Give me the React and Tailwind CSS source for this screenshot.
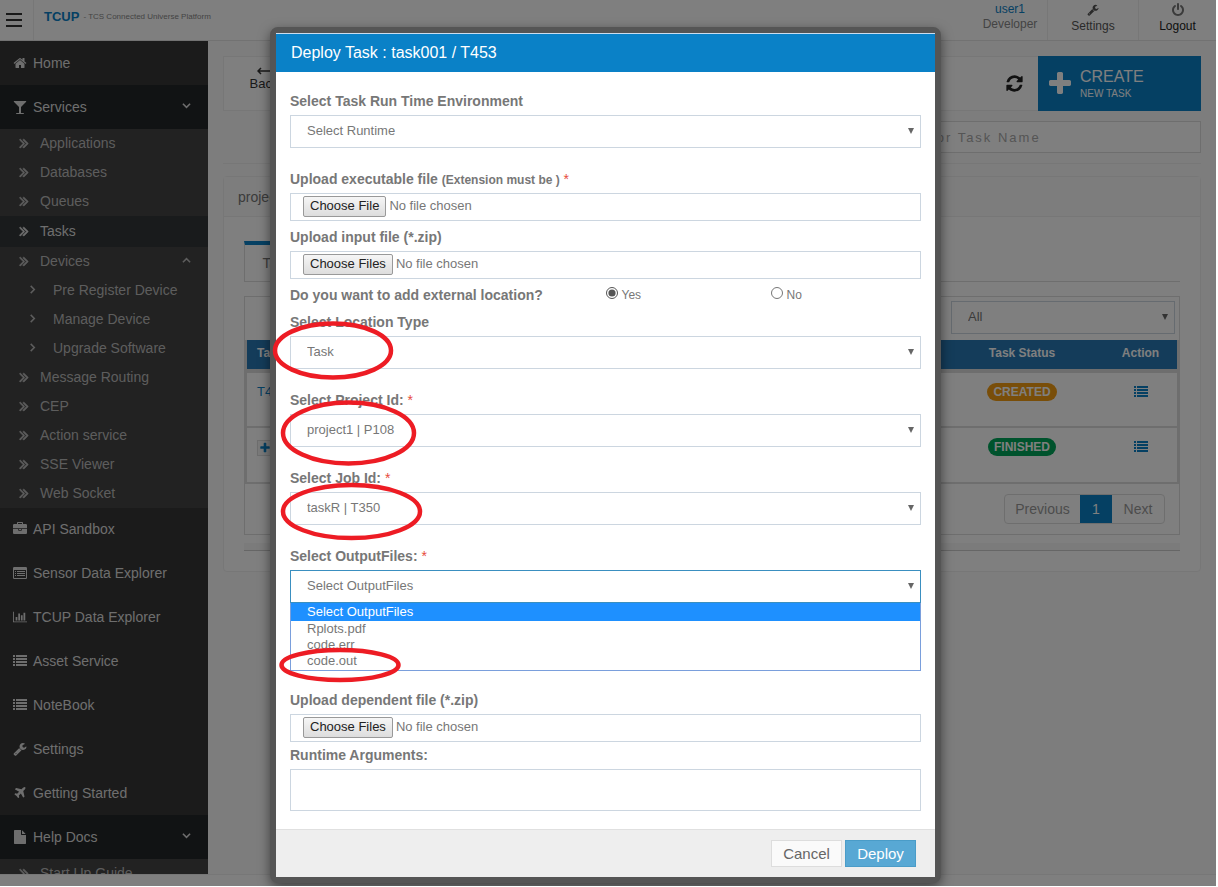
import { useState } from "react";

const ICONS = {
  home: "M1472 992v480q0 26-19 45t-45 19h-384v-384h-256v384h-384q-26 0-45-19t-19-45v-480q0-1 .5-3t.5-3l575-474 575 474q1 2 1 6zm223-69l-62 74q-8 9-21 11h-3q-13 0-21-7l-692-577-692 577q-12 8-24 7-13-2-21-11l-62-74q-8-10-7-23.5t11-21.5l719-599q32-26 76-26t76 26l244 204v-195q0-14 9-23t23-9h192q14 0 23 9t9 23v408l219 182q10 8 11 21.5t-7 23.5z",
  glass: "M1699 186q0 35-43 78l-632 632v768h320q26 0 45 19t19 45-19 45-45 19h-896q-26 0-45-19t-19-45 19-45 45-19h320v-768l-632-632q-43-43-43-78 0-23 18-36.5t38-17.5 43-4h1408q23 0 43 4t38 17.5 18 36.5z",
  briefcase: "M640 256h512v-128h-512v128zm1152 640v480q0 66-47 113t-113 47h-1472q-66 0-113-47t-47-113v-480h672v160q0 26 19 45t45 19h320q26 0 45-19t19-45v-160h672zm-768 0v128h-256v-128h256zm768-480v384h-1792v-384q0-66 47-113t113-47h352v-160q0-40 28-68t68-28h576q40 0 68 28t28 68v160h352q66 0 113 47t47 113z",
  list: "M0 1280h256v256H0zM0 896h256v256H0zM0 512h256v256H0zM384 1280h1408v256H384zM384 896h1408v256H384zM384 512h1408v256H384zM0 128h256v256H0zM384 128h1408v256H384z",
  listAlt: "M160 128h1472q160 0 160 160v1216q0 160-160 160H160q-160 0-160-160V288q0-160 160-160zM128 512v960q0 64 64 64h1408q64 0 64-64V512zM256 640h128v128H256zM256 896h128v128H256zM256 1152h128v128H256zM512 640h1024v128H512zM512 896h1024v128H512zM512 1152h1024v128H512z",
  chart: "M640 896v512h-256v-512h256zm384-512v1024h-256v-1024h256zm1024 1152v128h-2048v-1536h128v1408h1920zm-640-896v768h-256v-768h256zm384-384v1152h-256v-1152h256z",
  wrench: "M448 1472q0-26-19-45t-45-19-45 19-19 45 19 45 45 19 45-19 19-45zm644-420l-682 682q-37 37-90 37-52 0-91-37l-106-108q-38-36-38-90 0-53 38-91l681-681q39 98 114.5 173.5t173.5 114.5zm634-435q0 39-23 106-47 134-164.5 217.5t-258.5 83.5q-185 0-316.5-131.5t-131.5-316.5 131.5-316.5 316.5-131.5q58 0 121.5 16.5t107.5 46.5q16 11 16 28t-16 28l-293 169v224l193 107q5-3 79-48.5t135.5-81 70.5-35.5q15 0 23.5 10t8.5 25z",
  plane: "M1568 160q44 52 12 148t-108 172l-161 161 160 696q5 19-12 33l-128 96q-7 6-19 6-4 0-7-1-15-3-21-16l-279-508-259 259 53 194q5 17-8 31l-96 96q-9 9-23 9h-2q-15-2-24-13l-189-252-252-189q-11-7-13-23-1-13 9-25l96-97q9-9 23-9 6 0 8 1l194 53 259-259-508-279q-14-8-17-24-2-16 9-27l128-128q14-13 30-8l665 159 160-160q76-76 172-108t148 12z",
  file: "M1152 512v-472q22 14 36 28l408 408q14 14 28 36h-472zm-128 32q0 40 28 68t68 28h544v1056q0 40-28 68t-68 28h-1344q-40 0-68-28t-28-68v-1600q0-40 28-68t68-28h800v544z",
  power: "M1664 896q0 156-61 298t-164 245-245 164-298 61-298-61-245-164-164-245-61-298q0-182 80.5-343t226.5-270q43-32 95.5-25t83.5 50q32 42 24.5 94.5t-49.5 84.5q-98 74-151.5 181t-53.5 228q0 104 40.5 198.5t109.5 163.5 163.5 109.5 198.5 40.5 198.5-40.5 163.5-109.5 109.5-163.5 40.5-198.5q0-121-53.5-228t-151.5-181q-42-32-49.5-84.5t24.5-94.5q31-43 84-50t95 25q146 109 226.5 270t80.5 343zm-640-768v640q0 52-38 90t-90 38-90-38-38-90v-640q0-52 38-90t90-38 90 38 38 90z",
  refresh: "M1639 1056q0 5-1 7-64 268-268 434.5t-478 166.5q-146 0-282.5-55t-243.5-157l-129 129q-19 19-45 19t-45-19-19-45v-448q0-26 19-45t45-19h448q26 0 45 19t19 45-19 45l-137 137q71 66 161 102t187 36q134 0 250-65t186-179q11-17 53-117 8-23 30-23h192q13 0 22.5 9.5t9.5 22.5zm25-800v448q0 26-19 45t-45 19h-448q-26 0-45-19t-19-45 19-45l138-138q-148-137-349-137-134 0-250 65t-186 179q-11 17-53 117-8 23-30 23h-199q-13 0-22.5-9.5t-9.5-22.5v-7q65-268 270-434.5t480-166.5q146 0 284 55.5t245 156.5l130-129q19-19 45-19t45 19 19 45z",
  plus: "M1600 736v192q0 40-28 68t-68 28h-416v416q0 40-28 68t-68 28h-192q-40 0-68-28t-28-68v-416h-416q-40 0-68-28t-28-68v-192q0-40 28-68t68-28h416v-416q0-40 28-68t68-28h192q40 0 68 28t28 68v416h416q40 0 68 28t28 68z",
  doubleRight: "M979 960q0 13-10 23l-466 466q-10 10-23 10t-23-10l-50-50q-10-10-10-23t10-23l393-393-393-393q-10-10-10-23t10-23l50-50q10-10 23-10t23 10l466 466q10 10 10 23zm384 0q0 13-10 23l-466 466q-10 10-23 10t-23-10l-50-50q-10-10-10-23t10-23l393-393-393-393q-10-10-10-23t10-23l50-50q10-10 23-10t23 10l466 466q10 10 10 23z",
};

function Icon({ name, className }) {
  return (
    <svg
      viewBox={name === "chart" ? "0 0 2048 1792" : "0 0 1792 1792"}
      className={className}
      fill="currentColor"
      fillRule="evenodd"
      aria-hidden="true"
    >
      <path d={ICONS[name]} />
    </svg>
  );
}

function Chevron({ d, className }) {
  return (
    <svg viewBox="0 0 10 10" className={className} fill="none" stroke="currentColor" strokeWidth="1.7" aria-hidden="true">
      <path d={d} />
    </svg>
  );
}

const DOWN = "M1 3l4 4 4-4";
const UP = "M1 7l4-4 4 4";
const RIGHT = "M3 1l4 4-4 4";

const services = [
  { label: "Applications" },
  { label: "Databases" },
  { label: "Queues" },
  { label: "Tasks", active: true },
  { label: "Devices", open: true },
  { label: "Pre Register Device", nested: true },
  { label: "Manage Device", nested: true },
  { label: "Upgrade Software", nested: true },
  { label: "Message Routing" },
  { label: "CEP" },
  { label: "Action service" },
  { label: "SSE Viewer" },
  { label: "Web Socket" },
];

const links = [
  { label: "API Sandbox", icon: "briefcase" },
  { label: "Sensor Data Explorer", icon: "listAlt" },
  { label: "TCUP Data Explorer", icon: "chart" },
  { label: "Asset Service", icon: "list" },
  { label: "NoteBook", icon: "list" },
  { label: "Settings", icon: "wrench" },
  { label: "Getting Started", icon: "plane" },
];

const outputFiles = ["Select OutputFiles", "Rplots.pdf", "code.err", "code.out"];

export default function App() {
  return (
    <div className="relative h-screen bg-white pr-0.5 pb-px font-['Liberation_Sans',Arial,sans-serif] text-sm">
      <div className="flex h-full flex-col overflow-hidden bg-[#fafafa]">
        <TopBar />
        <div className="flex min-h-0 flex-1">
          <Sidebar />
          <Tasks />
        </div>
        <footer className="h-3 shrink-0 border-t border-[#eee] bg-white" />
      </div>
      <div className="absolute top-0 right-0.5 bottom-px left-0 overflow-hidden bg-black/50 pt-[27px] pr-[5px]">
        <DeployDialog />
      </div>
    </div>
  );
}

function TopBar() {
  return (
    <header className="flex h-[41px] shrink-0 items-stretch border-b border-[#e4e4e4] bg-white">
      <button aria-label="Toggle menu" className="flex w-[34px] flex-col justify-center gap-1 border-r border-[#eee] pl-1.5">
        <span className="h-0.5 w-4 bg-[#333]" />
        <span className="h-0.5 w-4 bg-[#333]" />
        <span className="h-0.5 w-4 bg-[#333]" />
      </button>
      <div className="flex flex-1 items-center gap-1 pb-1.5 pl-2.5 text-[8px] text-[#888]">
        <span className="text-[13px] font-bold text-[#0a81c7]">TCUP</span>
        <span>- TCS Connected Universe Platform</span>
      </div>
      <div className="flex w-[74px] flex-col items-center text-xs leading-[15px] text-[#888]">
        <a href="#user" className="pt-0.5 text-[#0a81c7]">user1</a>
        <span>Developer</span>
      </div>
      <a href="#settings" className="flex w-[91px] flex-col items-center border-l border-[#eee] pt-1 text-xs text-[#555]">
        <Icon name="wrench" className="size-3" />
        <span className="leading-5">Settings</span>
      </a>
      <a href="#logout" className="flex w-[78px] flex-col items-center border-l border-[#eee] pt-[3px] text-xs text-[#222]">
        <Icon name="power" className="size-3.5 text-[#777]" />
        <span className="leading-[18px]">Logout</span>
      </a>
    </header>
  );
}

function Sidebar() {
  return (
    <nav className="w-52 shrink-0 overflow-hidden bg-[#363636] text-[#ddd]">
      <MainLink label="Home" icon="home" />
      <MainLink label="Services" icon="glass" open />
      <ul className="-mb-px bg-[#444] text-[#bbb]">
        {services.map((s) => (
          <SubLink key={s.label} {...s} />
        ))}
      </ul>
      {links.map((l) => (
        <MainLink key={l.label} {...l} />
      ))}
      <MainLink label="Help Docs" icon="file" open />
      <ul className="bg-[#444] text-[#bbb]">
        <SubLink label="Start Up Guide" />
      </ul>
    </nav>
  );
}

function MainLink({ label, icon, open }) {
  return (
    <a href="#menu" className={`flex h-11 items-center pr-4 pl-[13px] ${open ? "bg-[#222628]" : ""}`}>
      <Icon name={icon} className="mr-1.5 size-3.5" />
      {label}
      {open && <Chevron d={DOWN} className="mr-px mb-1 ml-auto size-[9px]" />}
    </a>
  );
}

function SubLink({ label, active, nested, open }) {
  return (
    <li>
      <a
        href="#menu"
        className={`flex items-center pr-4 pb-0.5 ${active ? "h-[31px] bg-[#323638] text-[#ddd]" : "h-[29px]"} ${nested ? "pl-7" : "pl-4"}`}
      >
        {nested ? (
          <Chevron d={RIGHT} className="mr-4 size-[9px]" />
        ) : (
          <Icon name="doubleRight" className="mr-2 size-4 stroke-current stroke-[80]" />
        )}
        {label}
        {open && <Chevron d={UP} className="mr-px ml-auto size-[9px]" />}
      </a>
    </li>
  );
}

function Tasks() {
  return (
    <main className="min-w-0 flex-1 px-[15px] pt-[15px]">
      <div className="flex h-[55px] border border-r-0 border-[#eee] bg-white">
        <button className="flex w-20 flex-col items-center pt-2.5 text-[13px] text-[#333]">
          <svg viewBox="0 0 14 8" className="h-2 w-3.5" fill="none" stroke="currentColor" strokeWidth="1.5" aria-hidden="true">
            <path d="M14 4H1M4 1L1 4l3 3" />
          </svg>
          Back
        </button>
        <button aria-label="Refresh" className="mr-3.5 ml-auto text-[#222]">
          <Icon name="refresh" className="size-[19px]" />
        </button>
        <button className="-my-px flex w-[163px] items-center bg-[#0a81c7] pl-2 text-left text-white">
          <Icon name="plus" className="mr-1.5 size-7" />
          <span>
            <span className="block text-base leading-5">CREATE</span>
            <span className="block text-[10px] leading-3.5">NEW TASK</span>
          </span>
        </button>
      </div>
      <div className="mt-2.5 flex justify-end border-b border-[#eee] pb-2.5">
        <input
          aria-label="Search tasks"
          placeholder="Search by Task Id or Task Name"
          className="h-8 w-[420px] border border-[#ddd] bg-white px-3 text-[13px] tracking-[2px] placeholder:text-[#aaa]"
        />
      </div>
      <section className="mt-3 rounded border border-[#eee] bg-white">
        <h2 className="h-10 border-b border-[#eee] bg-[#fafafa] px-3.5 leading-10 text-[#777]">project1</h2>
        <div className="px-5 pt-6 pb-5">
          <div className="border-b border-[#ddd]">
            <button className="h-10 w-[72px] border-t-4 border-l border-t-[#0a81c7] border-l-[#ddd] text-[#777]">Tasks</button>
          </div>
          <div className="mt-3.5 border border-[#ddd]">
            <div className="flex justify-end p-1 pb-1.5">
              <div className="w-56">
                <Select label="Status" options={["All"]} />
              </div>
            </div>
            <TaskTable />
            <div className="flex justify-end px-3.5 py-2.5">
              <div className="flex h-[30px] overflow-hidden rounded border border-[#ddd] text-[#999]">
                <button className="w-[75px]">Previous</button>
                <button className="w-8 bg-[#0a81c7] text-white">1</button>
                <button className="w-[52px]">Next</button>
              </div>
            </div>
          </div>
          <div className="mt-2 h-2 border-b border-[#ccc] bg-[#f6f6f6]" />
        </div>
      </section>
    </main>
  );
}

function TaskTable() {
  return (
    <table className="w-full border-collapse border-x-2 border-b-2 border-[#ddd] text-center text-[13px]">
      <thead className="h-[31px] border-b-4 border-[#ddd] bg-[#2878b4] text-xs text-white">
        <tr>
          <th className="w-40 pb-1 pl-2.5 text-left">Task Id</th>
          <th className="pb-1 text-right">End Time (IST)</th>
          <th className="w-[164px] pb-1">Task Status</th>
          <th className="w-[74px] pb-1">Action</th>
        </tr>
      </thead>
      <tbody className="text-[#777]">
        <TaskRow id="T453" status="CREATED" color="bg-[#f39c12]" />
        <TaskRow id="T350" status="FINISHED" color="bg-[#00a65a]" time="2018-02-12" />
      </tbody>
    </table>
  );
}

function TaskRow({ id, status, color, time }) {
  return (
    <tr className="h-14 border-b-2 border-[#ddd] align-top">
      <td className="pt-2.5 pl-2.5 text-left text-[#0a81c7]">
        {time ? (
          <button aria-label="Expand row" className="mr-2 border border-[#ddd] bg-[#f4f4f4] p-px align-middle">
            <Icon name="plus" className="size-3" />
          </button>
        ) : null}
        {id}
      </td>
      <td className="pt-2.5 text-right">{time}</td>
      <td className="pt-2.5">
        <span className={`inline-block rounded-full px-1.5 text-xs leading-[18px] font-bold text-white ${color}`}>{status}</span>
      </td>
      <td className="pt-3">
        <button aria-label="Task actions" className="text-[#0a81c7]">
          <Icon name="list" className="size-3.5" />
        </button>
      </td>
    </tr>
  );
}

function DeployDialog() {
  const [external, setExternal] = useState("yes");
  const [output, setOutput] = useState(outputFiles[0]);

  return (
    <div
      role="dialog"
      aria-label="Deploy Task"
      className="relative mx-auto max-w-[671px] rounded-lg border-[6px] border-[#555] bg-white shadow-[0_4px_12px_rgba(0,0,0,0.5)]"
    >
      <h1 className="h-[39px] border-t border-[#cde] bg-[#0a81c7] px-[15px] text-base leading-[38px] text-white">
        Deploy Task : task001 / T453
      </h1>
      <form className="px-3.5 pt-[19px] pb-[18px]" onSubmit={(e) => e.preventDefault()}>
        <Field label="Select Task Run Time Environment" id="runtime" className="mb-[21px]">
          <Select id="runtime" options={["Select Runtime"]} />
        </Field>
        <Field label="Upload executable file" note="(Extension must be )" required id="exe" className="mb-1.5">
          <FileInput id="exe" />
        </Field>
        <Field label="Upload input file (*.zip)" id="input" className="mb-1.5">
          <FileInput id="input" multiple />
        </Field>
        <fieldset className="mb-[7px] flex h-5 items-center text-xs text-[#777]">
          <legend className="float-left w-1/2 text-sm font-bold">Do you want to add external location?</legend>
          <label className="flex w-[165px] items-center gap-1">
            <input type="radio" name="external" className="mb-1 size-3 accent-[#555]" checked={external === "yes"} onChange={() => setExternal("yes")} />
            Yes
          </label>
          <label className="flex items-center gap-1">
            <input type="radio" name="external" className="mb-1 size-3 accent-[#555]" checked={external === "no"} onChange={() => setExternal("no")} />
            No
          </label>
        </fieldset>
        <Field label="Select Location Type" id="location" className="mb-[21px]">
          <Select id="location" options={["Task"]} />
        </Field>
        <Field label="Select Project Id:" required id="project" className="mb-[21px]">
          <Select id="project" options={["project1 | P108"]} />
        </Field>
        <Field label="Select Job Id:" required id="job" className="mb-[21px]">
          <Select id="job" options={["taskR | T350"]} />
        </Field>
        <Field label="Select OutputFiles:" required id="output" className="mb-[19px]">
          <Select id="output" options={outputFiles} value={output} onChange={(e) => setOutput(e.target.value)} focused />
          <ul role="listbox" aria-label="Output files" className="h-[68px] border border-t-0 border-[#7a9fdc] text-[13px] leading-4 text-[#777]">
            {outputFiles.map((f) => (
              <li
                key={f}
                role="option"
                aria-selected={f === output}
                className={`px-4 ${f === output ? "bg-[#1e90ff] leading-[18px] text-white" : ""}`}
                onClick={() => setOutput(f)}
              >
                {f}
              </li>
            ))}
          </ul>
        </Field>
        <Field label="Upload dependent file (*.zip)" id="deps" className="mb-[3px]">
          <FileInput id="deps" multiple />
        </Field>
        <Field label="Runtime Arguments:" id="args">
          <textarea id="args" className="block h-[42px] w-full resize-none border border-[#ccd6e0] px-4 py-2 text-[13px]" />
        </Field>
      </form>
      <div className="flex h-12 items-center justify-end gap-[3px] border-t border-[#e0e0e0] bg-[#eee] pr-[19px]">
        <button className="h-[27px] w-[71px] border border-[#ddd] bg-[#fafafa] text-[15px] text-[#666]">Cancel</button>
        <button className="h-[27px] w-[71px] border border-[#4a9cc8] bg-[#58a8d4] text-[15px] text-white">Deploy</button>
      </div>
      <Markers />
    </div>
  );
}

function Field({ label, note, required, id, className = "", children }) {
  return (
    <div className={className}>
      <label htmlFor={id} className="mb-1 block leading-5 font-bold text-[#777]">
        {label} {note && <span className="text-xs">{note}</span>}
        {required && <span className="font-normal text-[#e74c3c]"> *</span>}
      </label>
      {children}
    </div>
  );
}

function Select({ id, label, options, value, onChange, focused }) {
  return (
    <div className="relative">
      <select
        id={id}
        aria-label={label}
        value={value}
        onChange={onChange}
        className={`block h-[33px] w-full appearance-none border bg-white pr-6 pl-4 text-[13px] text-[#777] ${focused ? "border-[#3a8fc0]" : "border-[#ccd6e0]"}`}
      >
        {options.map((o) => (
          <option key={o}>{o}</option>
        ))}
      </select>
      <svg viewBox="0 0 6 6" className="pointer-events-none absolute top-[13px] right-[7px] size-1.5" aria-hidden="true">
        <path d="M0 0h6L3 6z" fill="#666" />
      </svg>
    </div>
  );
}

function FileInput({ id, multiple }) {
  return (
    <input
      id={id}
      type="file"
      multiple={multiple}
      className="block h-7 w-full border border-[#ccd6e0] pt-0.5 pl-3 text-[13px] text-[#777] file:mr-[3px] file:h-[21px] file:rounded-xs file:border file:border-solid file:border-[#999] file:bg-linear-to-b file:from-[#f6f6f6] file:to-[#ddd] file:px-1.5 file:text-[13px] file:text-[#222]"
    />
  );
}

// hand-drawn style rings around the values to pick
function Markers() {
  return (
    <svg
      viewBox="0 0 660 845"
      className="pointer-events-none absolute top-0 left-0 h-[845px] w-[660px] overflow-visible"
      fill="none"
      stroke="#ed1c24"
      strokeWidth="4.5"
      aria-hidden="true"
    >
      <ellipse cx="57" cy="317.5" rx="58" ry="27" />
      <ellipse cx="72.5" cy="400" rx="65.5" ry="30.5" />
      <ellipse cx="75.5" cy="478.5" rx="68.5" ry="26.5" />
      <ellipse cx="64" cy="632" rx="58.5" ry="15" />
    </svg>
  );
}
